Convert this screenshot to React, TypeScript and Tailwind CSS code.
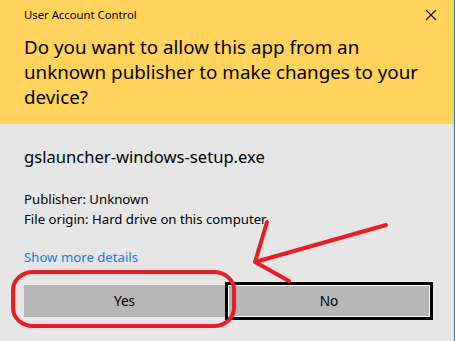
import React from "react";

export default function App() {
  return (
    <div
      className="relative w-[455px] h-[341px] bg-[#e6e6e6] border-r border-[#1979ca] overflow-hidden text-black"
      style={{ fontFamily: '"Noto Sans", "Open Sans", sans-serif' }}
    >
      <div className="bg-[#ffd35c] h-[124px] pl-[24px] pr-[14px] pt-[5px]">
        <div className="flex items-center justify-between h-[20px]">
          <span className="text-[11.3px] leading-[20px]">User Account Control</span>
          <svg width="12" height="12" viewBox="0 0 12 12" className="mr-[3px]">
            <path d="M1 1 L11 11 M11 1 L1 11" stroke="#1a1a1a" strokeWidth="1.2" />
          </svg>
        </div>
        <div className="mt-[10px] text-[18.8px] leading-[25px]">
          Do you want to allow this app from an unknown publisher to make changes to your device?
        </div>
      </div>
      <div className="pl-[24px] pt-[21px]">
        <div className="text-[16.6px] leading-[24px]">gslauncher-windows-setup.exe</div>
        <div className="mt-[20px] text-[13.2px] leading-[20px]">
          <div>Publisher: Unknown</div>
          <div>File origin: Hard drive on this computer</div>
        </div>
        <div className="mt-[18px] text-[13.2px] leading-[20px] text-[#1979ca]">Show more details</div>
        <div className="mt-[15px] flex items-center">
          <div className="w-[201px] h-[32px] bg-[#b7b7b7] flex items-center justify-center text-[13.6px]">Yes</div>
          <div className="w-[208px] h-[38px] border-[3px] border-black">
            <div className="h-full border border-white bg-[#b7b7b7] flex items-center justify-center text-[13.6px]">No</div>
          </div>
        </div>
      </div>
      <svg className="absolute left-0 top-0 pointer-events-none" width="455" height="341" viewBox="0 0 455 341">
        <rect x="13" y="272" width="221" height="54" rx="20" ry="18" fill="none" stroke="#ed1c24" strokeWidth="4" />
        <path d="M386 225 L255 262 M255 262 L267 222 M255 262 L289 281" fill="none" stroke="#ed1c24" strokeWidth="4" strokeLinecap="round" />
      </svg>
    </div>
  );
}
